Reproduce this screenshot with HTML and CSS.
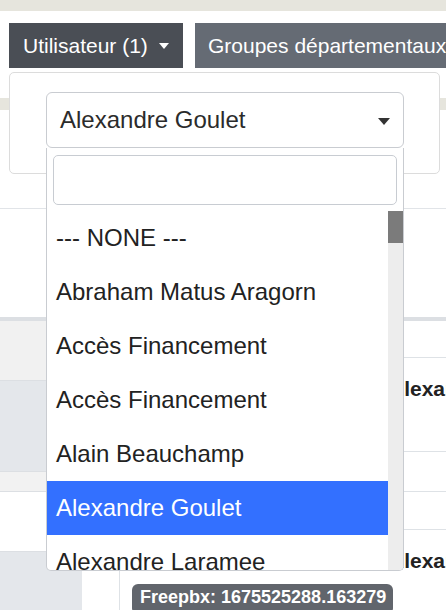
FILE: index.html
```
<!DOCTYPE html>
<html>
<head>
<meta charset="utf-8">
<title>Utilisateur</title>
<link rel="stylesheet" href="styles.css">
</head>
<body>
<div class="topstrip"></div>
<div class="toolbar">
	<div class="btn btn-dark">Utilisateur (1) <span class="caret"></span></div>
	<div class="btn btn-grey">Groupes départementaux</div>
</div>
<div class="spacer"></div>
<div class="band"></div>
<div class="blank"></div>
<div class="blank2"></div>
<div class="divider"></div>
<div class="grid">
	<div class="leftcol">
		<div class="lrow lrow1"></div>
		<div class="lrow lrow2"></div>
		<div class="lrow lrow3"></div>
		<div class="lrow lrow4"></div>
		<div class="lrow5"><div class="lcell"></div></div>
	</div>
	<div class="rightcol">
		<div class="rrow rrow1"></div>
		<div class="rrow rrow2">Alexandre Goulet</div>
		<div class="rrow rrow3"></div>
		<div class="rrow rrow4"></div>
		<div class="rrow5">Alexandre Laramee</div>
	</div>
</div>

<div class="popover">
	<div class="select">
		<span class="selected">Alexandre Goulet</span>
		<span class="arrow"></span>
		<div class="dropdown">
			<div class="search"></div>
			<div class="list">
				<div class="options">
					<div class="option">--- NONE ---</div>
					<div class="option">Abraham Matus Aragorn</div>
					<div class="option">Accès Financement</div>
					<div class="option">Accès Financement</div>
					<div class="option">Alain Beauchamp</div>
					<div class="option active">Alexandre Goulet</div>
					<div class="option">Alexandre Laramee</div>
				</div>
				<div class="scrollbar"><div class="thumb"></div></div>
			</div>
		</div>
	</div>
</div>

<div class="badge">Freepbx: 1675525288.163279</div>
</body>
</html>
```
FILE: styles.css
```
body {
	margin: 0;
	width: 446px;
	height: 610px;
	overflow: hidden;
	position: relative;
	background: white;
	font-family: "Liberation Sans", Arial, sans-serif;
	color: #222;
}
.topstrip {
	height: 11px;
	background-color: #e6e5dd;
}
.toolbar {
	display: flex;
	gap: 12px;
	padding: 12px 0 0 9px;
	white-space: nowrap;
}
.btn {
	height: 45px;
	display: flex;
	align-items: center;
	padding: 0 15px 0 14px;
	font-size: 21px;
	color: white;
	flex-shrink: 0;
}
.btn-dark {
	background-color: #4a4e55;
	width: 174px;
	box-sizing: border-box;
}
.btn-grey {
	background-color: #656b74;
	padding-left: 13px;
}
.caret {
	display: inline-block;
	margin-left: 11px;
	border-top: 6px solid white;
	border-left: 5px solid transparent;
	border-right: 5px solid transparent;
}
.spacer {
	height: 30px;
}
.band {
	height: 12px;
	background-color: #e6e5dd;
}
.blank {
	height: 98px;
	border-bottom: 1px solid #e1e4e8;
}
.blank2 {
	height: 108px;
}
.divider {
	height: 4px;
	background-color: #dcdfe3;
}
.grid {
	display: flex;
	height: 289px;
}
.leftcol {
	width: 119px;
	border-right: 1px solid #dee2e6;
	display: flex;
	flex-direction: column;
}
.lrow {
	border-bottom: 1px solid #dcdfe3;
}
.lrow1 {
	height: 59px;
	background-color: #f1f1f1;
}
.lrow2 {
	height: 90px;
	background-color: #e4e7eb;
}
.lrow3 {
	height: 19px;
	background-color: #f2f2f2;
}
.lrow4 {
	height: 59px;
}
.lrow5 {
	flex: 1;
	display: flex;
}
.lcell {
	width: 82px;
	background-color: #e4e7eb;
}
.rightcol {
	flex: 1;
	display: flex;
	flex-direction: column;
	overflow: hidden;
}
.rrow {
	border-bottom: 1px solid #dee2e6;
}
.rrow1 {
	height: 36px;
}
.rrow2, .rrow5 {
	padding: 19px 0 0 269px;
	font-size: 21px;
	font-weight: bold;
	white-space: nowrap;
	box-sizing: border-box;
}
.rrow2 {
	height: 94px;
}
.rrow3 {
	height: 39px;
}
.rrow4 {
	height: 37px;
}
.rrow5 {
	flex: 1;
}

.popover {
	position: absolute;
	left: 9px;
	top: 72px;
	width: 431px;
	height: 102px;
	box-sizing: border-box;
	border: 1px solid #dcdcdc;
	border-radius: 5px;
	background: white;
	padding: 19px 0 0 36px;
}
.select {
	position: relative;
	width: 358px;
	height: 56px;
	box-sizing: border-box;
	border: 1px solid #c9ccd1;
	border-radius: 6px;
	display: flex;
	align-items: center;
	font-size: 24px;
	color: #2b2b2b;
}
.selected {
	padding-left: 13px;
}
.arrow {
	margin-left: auto;
	margin-right: 13px;
	margin-top: 2px;
	border-top: 7px solid #333;
	border-left: 6px solid transparent;
	border-right: 6px solid transparent;
}
.dropdown {
	position: absolute;
	left: -1px;
	top: 55px;
	width: 358px;
	height: 423px;
	box-sizing: border-box;
	border: 1px solid #c9ccd1;
	border-top: none;
	border-radius: 0 0 5px 5px;
	background: white;
	padding: 7px 0 0 0;
	display: flex;
	flex-direction: column;
	overflow: hidden;
}
.search {
	height: 50px;
	margin: 0 6px 6px 6px;
	box-sizing: border-box;
	border: 1px solid #c8ccd2;
	border-radius: 5px;
}
.list {
	flex: 1;
	display: flex;
	overflow: hidden;
}
.options {
	flex: 1;
	overflow: hidden;
}
.option {
	height: 54px;
	line-height: 54px;
	padding-left: 9px;
	font-size: 24px;
	color: #222;
	white-space: nowrap;
}
.option.active {
	background-color: #3370ff;
	color: white;
}
.scrollbar {
	width: 15px;
	background-color: #ededed;
}
.thumb {
	height: 32px;
	background-color: #7b7b7b;
}
.badge {
	position: absolute;
	left: 132px;
	top: 584px;
	height: 30px;
	line-height: 26px;
	padding: 0 7px 0 8px;
	border-radius: 6px;
	background-color: #61656c;
	color: white;
	font-size: 18px;
	font-weight: bold;
}
```
